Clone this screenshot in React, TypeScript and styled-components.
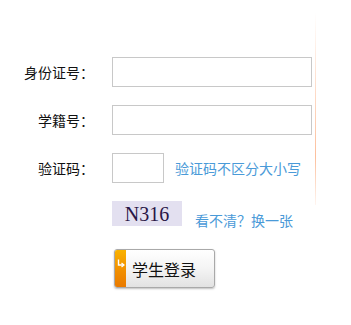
import React from 'react'
import styled, { createGlobalStyle } from 'styled-components'

const GlobalStyle = createGlobalStyle`
  html, body {
    margin: 0;
    padding: 0;
    background: #fff;
  }
  body {
    font-family: "Noto Sans CJK SC", "Noto Sans", sans-serif;
  }
`

const rows = [
    { label: '身份证号：', wide: true },
    { label: '学籍号：', wide: true },
]

export default function App() {
    return <>
        <GlobalStyle />
        <Panel>
            <Form>
                {rows.map(row => (
                    <Row key={row.label}>
                        <Label>{row.label}</Label>
                        <Input type="text" $width={200} />
                    </Row>
                ))}
                <Row>
                    <Label>验证码：</Label>
                    <Input type="text" $width={52} />
                    <Hint>验证码不区分大小写</Hint>
                </Row>
                <CaptchaRow>
                    <Label />
                    <Captcha>N316</Captcha>
                    <Refresh>看不清？换一张</Refresh>
                </CaptchaRow>
                <ButtonRow>
                    <Label />
                    <LoginButton>
                        <Strip>
                            <svg width="8" height="9" viewBox="0 0 8 9">
                                <path d="M1.5 0.5 V6 H6" fill="none" stroke="#fff" strokeWidth="1.4" />
                                <path d="M4.5 4 L7 6 L4.5 8" fill="none" stroke="#fff" strokeWidth="1.2" />
                            </svg>
                        </Strip>
                        <ButtonText>学生登录</ButtonText>
                    </LoginButton>
                </ButtonRow>
            </Form>
        </Panel>
    </>
}

const Panel = styled.div`
  position: relative;
  width: 351px;
  height: 325px;

  &::after {
    content: '';
    position: absolute;
    left: 315px;
    top: 12px;
    width: 1px;
    height: 193px;
    background: linear-gradient(to bottom, rgba(252, 190, 155, 0) 0%, rgba(252, 190, 155, 0.6) 45%, #fcbf9c 75%, rgba(252, 190, 155, 0.15) 100%);
  }
`

const Form = styled.div`
  display: flex;
  flex-direction: column;
  gap: 18px;
  padding-top: 57px;
`

const Row = styled.div`
  display: flex;
  align-items: center;
  height: 30px;
`

const CaptchaRow = styled(Row)`
  height: 25px;
  align-items: flex-start;
`

const ButtonRow = styled(Row)`
  height: 39px;
  margin-top: 5px;
`

const Label = styled.div`
  width: 94px;
  margin-right: 18px;
  text-align: right;
  font-size: 14px;
  color: #111;
  flex-shrink: 0;
`

const Input = styled.input<{ $width: number }>`
  box-sizing: border-box;
  width: ${p => p.$width}px;
  height: 30px;
  border: 1px solid #c8c8c8;
  margin: 0;
  padding: 0 4px;
  outline: none;
  background: #fff;
`

const Hint = styled.span`
  margin-left: 11px;
  font-size: 14px;
  color: #4a9ad8;
`

const Captcha = styled.div`
  width: 70px;
  height: 25px;
  background: #e3e0f0;
  display: flex;
  align-items: center;
  justify-content: center;
  font-family: "Liberation Serif", serif;
  font-size: 20px;
  color: #2a1646;
  line-height: 1;
`

const Refresh = styled.span`
  margin-left: 13px;
  margin-top: 9px;
  font-size: 14px;
  color: #4a9ad8;
`

const LoginButton = styled.div`
  box-sizing: border-box;
  display: flex;
  margin-left: 2px;
  width: 101px;
  height: 39px;
  border: 1px solid #a9a9a9;
  border-radius: 3px;
  overflow: hidden;
  background: linear-gradient(to bottom, #ffffff 0%, #f4f4f4 50%, #e2e2e2 100%);
  box-shadow: 0 1px 2px rgba(0, 0, 0, 0.25);
`

const Strip = styled.div`
  width: 11px;
  flex-shrink: 0;
  display: flex;
  justify-content: center;
  padding-top: 9px;
  box-sizing: border-box;
  background: linear-gradient(to bottom, #f9b200 0%, #f29200 50%, #e97a00 100%);
`

const ButtonText = styled.div`
  flex: 1;
  display: flex;
  align-items: center;
  padding-left: 6px;
  font-size: 16px;
  color: #111;
`
